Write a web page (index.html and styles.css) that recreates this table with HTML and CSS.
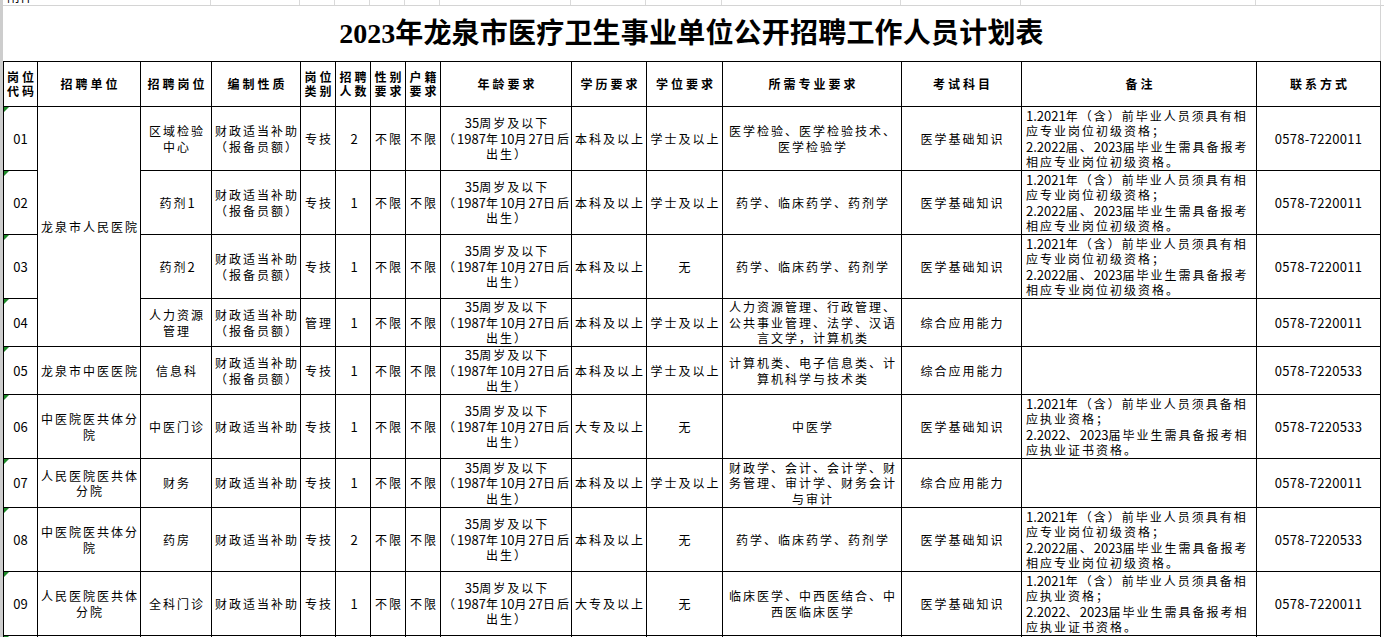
FILE: index.html
```html
<!DOCTYPE html>
<html lang="zh-CN">
<head>
<meta charset="utf-8">
<title>2023年龙泉市医疗卫生事业单位公开招聘工作人员计划表</title>
<link rel="stylesheet" href="styles.css">
</head>
<body>
<div class="sheet">
  <div class="toprow">
    <div class="tc c-ab"><span class="attach">附件</span></div>
    <div class="tc c3"></div><div class="tc c4"></div><div class="tc c5"></div><div class="tc c6"></div><div class="tc c7"></div><div class="tc c8"></div>
    <div class="tc c9"></div><div class="tc c10"></div><div class="tc c11"></div><div class="tc c12"></div><div class="tc c13"></div><div class="tc c14"></div><div class="tc c15"></div>
  </div>
  <div class="title"><span class="tnum">2023</span>年龙泉市医疗卫生事业单位公开招聘工作人员计划表</div>
  <table class="plan">
    <colgroup>
      <col class="k1"><col class="k2"><col class="k3"><col class="k4"><col class="k5"><col class="k6"><col class="k7"><col class="k8">
      <col class="k9"><col class="k10"><col class="k11"><col class="k12"><col class="k13"><col class="k14"><col class="k15">
    </colgroup>
    <thead>
      <tr class="hd">
        <th>岗位<br>代码</th><th>招聘单位</th><th>招聘岗位</th><th>编制性质</th><th>岗位<br>类别</th><th>招聘<br>人数</th><th>性别<br>要求</th><th>户籍<br>要求</th>
        <th>年龄要求</th><th>学历要求</th><th>学位要求</th><th>所需专业要求</th><th>考试科目</th><th>备注</th><th>联系方式</th>
      </tr>
    </thead>
    <tbody>
      <tr class="r64">
        <td class="code"><span class="n">01</span></td>
        <td rowspan="4">龙泉市人民医院</td>
        <td>区域检验<br>中心</td>
        <td>财政适当补助<br>（报备员额）</td>
        <td>专技</td><td><span class="n">2</span></td><td>不限</td><td>不限</td>
        <td><span class="n">35</span>周岁及以下<br>（<span class="n">1987</span>年<span class="n">10</span>月<span class="n">27</span>日后<br>出生）</td>
        <td>本科及以上</td><td>学士及以上</td>
        <td>医学检验、医学检验技术、<br>医学检验学</td>
        <td>医学基础知识</td>
        <td class="note"><span class="n">1.2021</span>年（含）前毕业人员须具有相<br>应专业岗位初级资格；<br><span class="n">2.2022</span>届、<span class="n">2023</span>届毕业生需具备报考<br>相应专业岗位初级资格。</td>
        <td class="tel">0578-7220011</td>
      </tr>
      <tr class="r64">
        <td class="code"><span class="n">02</span></td>
        <td>药剂<span class="n">1</span></td>
        <td>财政适当补助<br>（报备员额）</td>
        <td>专技</td><td><span class="n">1</span></td><td>不限</td><td>不限</td>
        <td><span class="n">35</span>周岁及以下<br>（<span class="n">1987</span>年<span class="n">10</span>月<span class="n">27</span>日后<br>出生）</td>
        <td>本科及以上</td><td>学士及以上</td>
        <td>药学、临床药学、药剂学</td>
        <td>医学基础知识</td>
        <td class="note"><span class="n">1.2021</span>年（含）前毕业人员须具有相<br>应专业岗位初级资格；<br><span class="n">2.2022</span>届、<span class="n">2023</span>届毕业生需具备报考<br>相应专业岗位初级资格。</td>
        <td class="tel">0578-7220011</td>
      </tr>
      <tr class="r64">
        <td class="code"><span class="n">03</span></td>
        <td>药剂<span class="n">2</span></td>
        <td>财政适当补助<br>（报备员额）</td>
        <td>专技</td><td><span class="n">1</span></td><td>不限</td><td>不限</td>
        <td><span class="n">35</span>周岁及以下<br>（<span class="n">1987</span>年<span class="n">10</span>月<span class="n">27</span>日后<br>出生）</td>
        <td>本科及以上</td><td>无</td>
        <td>药学、临床药学、药剂学</td>
        <td>医学基础知识</td>
        <td class="note"><span class="n">1.2021</span>年（含）前毕业人员须具有相<br>应专业岗位初级资格；<br><span class="n">2.2022</span>届、<span class="n">2023</span>届毕业生需具备报考<br>相应专业岗位初级资格。</td>
        <td class="tel">0578-7220011</td>
      </tr>
      <tr class="r48">
        <td class="code"><span class="n">04</span></td>
        <td>人力资源<br>管理</td>
        <td>财政适当补助<br>（报备员额）</td>
        <td>管理</td><td><span class="n">1</span></td><td>不限</td><td>不限</td>
        <td><span class="n">35</span>周岁及以下<br>（<span class="n">1987</span>年<span class="n">10</span>月<span class="n">27</span>日后<br>出生）</td>
        <td>本科及以上</td><td>学士及以上</td>
        <td>人力资源管理、行政管理、<br>公共事业管理、法学、汉语<br>言文学，计算机类</td>
        <td>综合应用能力</td>
        <td class="note"></td>
        <td class="tel">0578-7220011</td>
      </tr>
      <tr class="r48">
        <td class="code"><span class="n">05</span></td>
        <td>龙泉市中医医院</td>
        <td>信息科</td>
        <td>财政适当补助<br>（报备员额）</td>
        <td>专技</td><td><span class="n">1</span></td><td>不限</td><td>不限</td>
        <td><span class="n">35</span>周岁及以下<br>（<span class="n">1987</span>年<span class="n">10</span>月<span class="n">27</span>日后<br>出生）</td>
        <td>本科及以上</td><td>学士及以上</td>
        <td>计算机类、电子信息类、计<br>算机科学与技术类</td>
        <td>综合应用能力</td>
        <td class="note"></td>
        <td class="tel">0578-7220533</td>
      </tr>
      <tr class="r64">
        <td class="code"><span class="n">06</span></td>
        <td>中医院医共体分<br>院</td>
        <td>中医门诊</td>
        <td>财政适当补助</td>
        <td>专技</td><td><span class="n">1</span></td><td>不限</td><td>不限</td>
        <td><span class="n">35</span>周岁及以下<br>（<span class="n">1987</span>年<span class="n">10</span>月<span class="n">27</span>日后<br>出生）</td>
        <td>大专及以上</td><td>无</td>
        <td>中医学</td>
        <td>医学基础知识</td>
        <td class="note"><span class="n">1.2021</span>年（含）前毕业人员须具备相<br>应执业资格；<br><span class="n">2.2022</span>、<span class="n">2023</span>届毕业生需具备报考相<br>应执业证书资格。</td>
        <td class="tel">0578-7220533</td>
      </tr>
      <tr class="r49">
        <td class="code"><span class="n">07</span></td>
        <td>人民医院医共体<br>分院</td>
        <td>财务</td>
        <td>财政适当补助</td>
        <td>专技</td><td><span class="n">1</span></td><td>不限</td><td>不限</td>
        <td><span class="n">35</span>周岁及以下<br>（<span class="n">1987</span>年<span class="n">10</span>月<span class="n">27</span>日后<br>出生）</td>
        <td>本科及以上</td><td>学士及以上</td>
        <td>财政学、会计、会计学、财<br>务管理、审计学、财务会计<br>与审计</td>
        <td>综合应用能力</td>
        <td class="note"></td>
        <td class="tel">0578-7220011</td>
      </tr>
      <tr class="r64">
        <td class="code"><span class="n">08</span></td>
        <td>中医院医共体分<br>院</td>
        <td>药房</td>
        <td>财政适当补助</td>
        <td>专技</td><td><span class="n">2</span></td><td>不限</td><td>不限</td>
        <td><span class="n">35</span>周岁及以下<br>（<span class="n">1987</span>年<span class="n">10</span>月<span class="n">27</span>日后<br>出生）</td>
        <td>本科及以上</td><td>无</td>
        <td>药学、临床药学、药剂学</td>
        <td>医学基础知识</td>
        <td class="note"><span class="n">1.2021</span>年（含）前毕业人员须具有相<br>应专业岗位初级资格；<br><span class="n">2.2022</span>届、<span class="n">2023</span>届毕业生需具备报考<br>相应专业岗位初级资格。</td>
        <td class="tel">0578-7220533</td>
      </tr>
      <tr class="r64">
        <td class="code"><span class="n">09</span></td>
        <td>人民医院医共体<br>分院</td>
        <td>全科门诊</td>
        <td>财政适当补助</td>
        <td>专技</td><td><span class="n">1</span></td><td>不限</td><td>不限</td>
        <td><span class="n">35</span>周岁及以下<br>（<span class="n">1987</span>年<span class="n">10</span>月<span class="n">27</span>日后<br>出生）</td>
        <td>大专及以上</td><td>无</td>
        <td>临床医学、中西医结合、中<br>西医临床医学</td>
        <td>医学基础知识</td>
        <td class="note"><span class="n">1.2021</span>年（含）前毕业人员须具备相<br>应执业资格；<br><span class="n">2.2022</span>、<span class="n">2023</span>届毕业生需具备报考相<br>应执业证书资格。</td>
        <td class="tel">0578-7220011</td>
      </tr>
      <tr class="r64">
        <td class="code"></td><td></td><td></td><td></td><td></td><td></td><td></td><td></td>
        <td></td><td></td><td></td><td></td><td></td><td></td><td></td>
      </tr>
    </tbody>
  </table>
</div>
</body>
</html>
```
FILE: styles.css
```css
html, body {
  margin: 0;
  padding: 0;
  background: #ffffff;
}
body {
  font-family: "Noto Sans CJK SC", "Noto Sans", sans-serif;
  color: #000000;
}
.sheet {
  width: 1381px;
  height: 637px;
  overflow: hidden;
  border-left: 3px solid #cdcdcd;
  box-sizing: content-box;
}
.toprow {
  display: flex;
  height: 5px;
  border-bottom: 1px solid #d4d4d4;
  overflow: hidden;
}
.tc {
  height: 5px;
  border-right: 1px solid #dadada;
  box-sizing: border-box;
  flex: none;
  overflow: hidden;
}
.c-ab { width: 137px; border-right-color: transparent; }
.c3 { width: 71px; }
.c4 { width: 89px; }
.c5, .c6, .c7, .c8 { width: 35px; }
.c9 { width: 131px; }
.c10 { width: 75px; }
.c11 { width: 76px; }
.c12 { width: 179px; }
.c13 { width: 120px; }
.c14 { width: 235px; }
.c15 { width: 125px; }
.attach {
  display: block;
  margin: -11px 0 0 4px;
  font-size: 13px;
  line-height: 14px;
  color: #000;
}
.title {
  height: 55px;
  line-height: 56px;
  width: 1378px;
  text-align: center;
  font-family: "Liberation Serif", "Noto Sans CJK SC", serif;
  font-weight: 700;
  font-size: 28px;
  letter-spacing: 0.2px;
  border-right: 1px solid #d4d4d4;
  box-sizing: border-box;
}
.tnum {
  font-family: "Liberation Serif", serif;
  letter-spacing: 0;
}
.plan {
  border-collapse: collapse;
  table-layout: fixed;
  width: 1378px;
}
.k1 { width: 34px; }
.k2 { width: 103px; }
.k3 { width: 71px; }
.k4 { width: 89px; }
.k5, .k6, .k7, .k8 { width: 35px; }
.k9 { width: 131px; }
.k10 { width: 75px; }
.k11 { width: 76px; }
.k12 { width: 179px; }
.k13 { width: 120px; }
.k14 { width: 235px; }
.k15 { width: 124px; }
.plan th, .plan td {
  border: 1px solid #000000;
  padding: 0 0 0 2px;
  text-align: center;
  vertical-align: middle;
  white-space: nowrap;
  overflow: hidden;
  font-size: 12px;
  letter-spacing: 2px;
  line-height: 15.5px;
  font-weight: 400;
}
.plan th {
  font-weight: 700;
  letter-spacing: 3px;
  line-height: 14px;
  padding-left: 3px;
}
.hd { height: 45px; }
.r64 { height: 64px; }
.r48 { height: 48px; }
.r49 { height: 49px; }
.n {
  font-size: 13px;
  letter-spacing: 0;
  line-height: 15px;
}
.plan td.note {
  text-align: left;
  padding-left: 4px;
}
.plan td.tel {
  font-size: 13px;
  letter-spacing: 0.3px;
  padding-left: 0;
}
.plan td.code {
  position: relative;
  padding-left: 0;
}
.plan td.code::before {
  content: "";
  position: absolute;
  left: 0;
  top: 0;
  width: 0;
  height: 0;
  border-top: 5px solid #1f8a2a;
  border-right: 5px solid transparent;
}
```
